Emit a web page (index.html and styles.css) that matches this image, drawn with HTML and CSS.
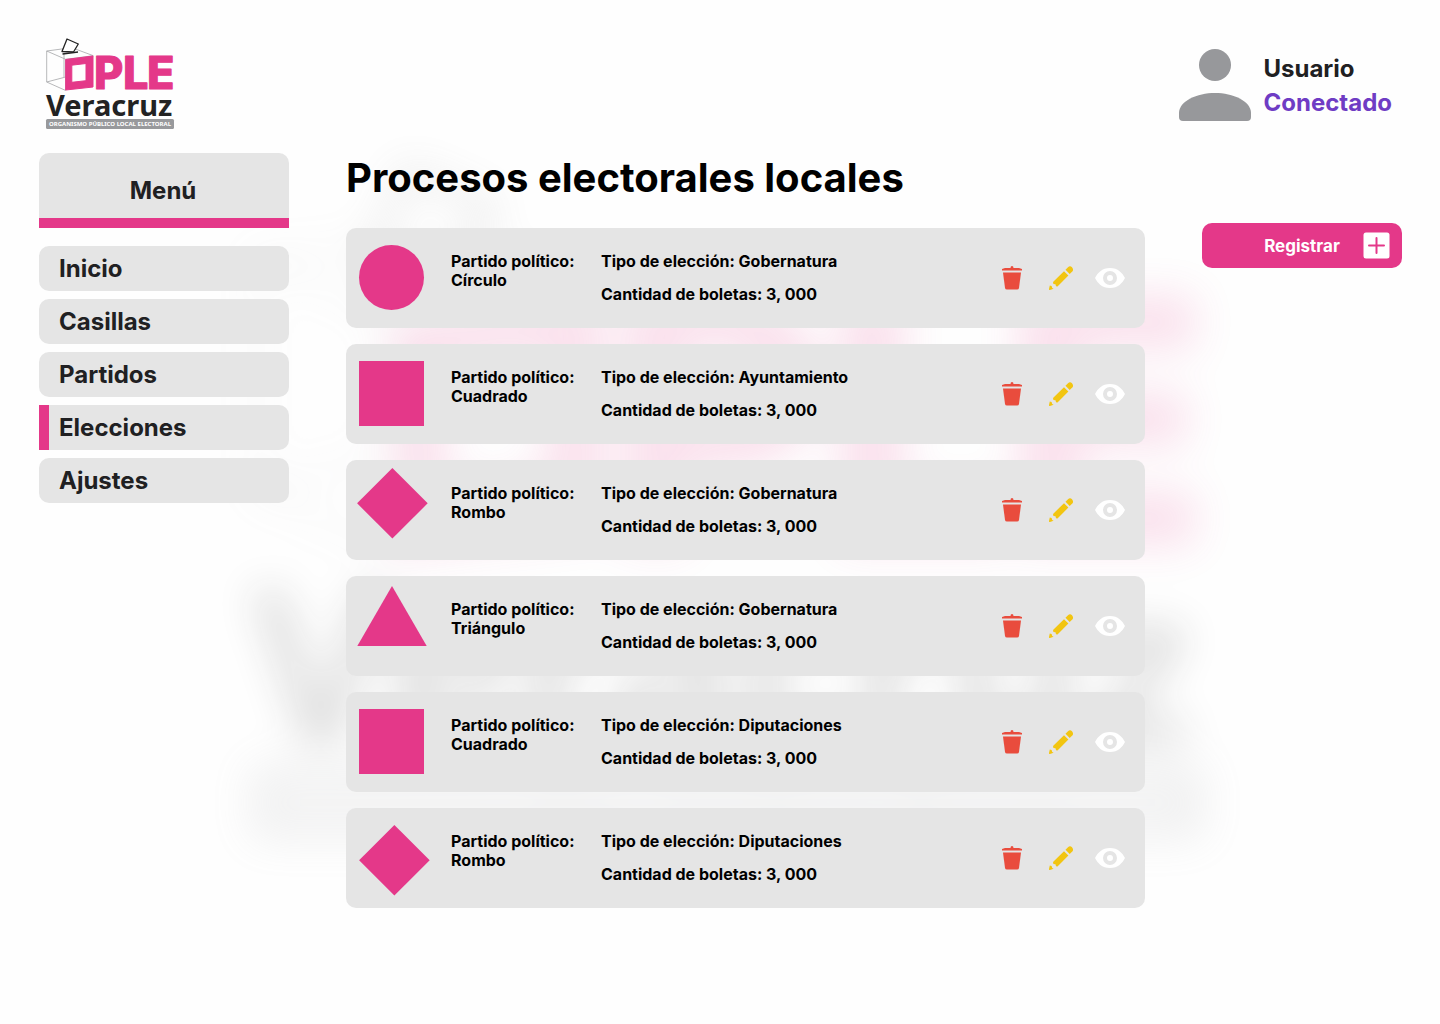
FILE: index.html
```html
<!DOCTYPE html>
<html lang="es">
<head>
<meta charset="utf-8">
<meta name="viewport" content="width=device-width, initial-scale=1">
<title>Procesos electorales locales</title>
<link rel="stylesheet" href="styles.css">
</head>
<body>
<svg class="sprite" width="0" height="0" aria-hidden="true">
  <defs>
    <g id="brand">
      <path d="M46.700 51v31L65.700 90.500V59.300zM46.700 51 64 48.700M74 48.500 93.300 55.700 65.700 59.300M64 53v24M46.700 82 65.700 77" fill="none" stroke="#a5a6a8" stroke-width=".8"/>
      <path d="M67 39 78.300 44 73.500 52 62 51.500z" fill="#fff" stroke="#232323" stroke-width="1.300" stroke-linejoin="round"/>
      <path d="M62.500 54 78 52" stroke="#232323" stroke-width="1.300" fill="none"/>
      <path fill-rule="evenodd" fill="#e43889" stroke="#e43889" stroke-linejoin="round" d="M65.700 59.500 93 56V87L65.700 90zM71.800 65.200V82.300L86 80.700V63.500z"/>
      <text class="brand-ple" x="94 123 147" y="89">PLE</text>
      <text class="brand-name" x="46" y="116">Veracruz</text>
      <rect x="46" y="119" width="128" height="10" rx="1.500" fill="#98999c"/>
      <text class="brand-tagline" x="110" y="126">ORGANISMO PÚBLICO LOCAL ELECTORAL</text>
    </g>
    <g id="trash" fill="#e94c3d">
      <path d="M0 4.500V3L3 2h5.500q0-2 1.500-2t1.500 2H17l3 1V4.500z"/>
      <path d="M1 6.500h18l-2 15.500q-.3 1.500-2 1.500H5q-1.700 0-2-1.500z"/>
    </g>
    <g id="pencil" fill="#f2c511">
      <path d="M16.500 3.800 19 1.300q2-2 4 0l.3.400q1.500 2 0 3.800L20.700 8z"/>
      <path d="M15 5.200 19.400 9.500 8.500 20.500 7 20.300 6.500 18.300 4.400 18 4 15.900z"/>
      <path d="M.800 19.500 2.600 20.100 3.200 22 4.600 22.700 1 24q-1.200.2-1-1z"/>
    </g>
    <path id="eye" fill="#fff" fill-rule="evenodd" d="M15 0C23 0 27.500 5 30 10 27.500 15 23 20 15 20S2.500 15 0 10C2.500 5 7 0 15 0zM15 3a7 7 0 1 0 0 14 7 7 0 0 0 0-14zM15 7a3 3 0 1 1 0 6 3 3 0 0 1 0-6z"/>
  </defs>
</svg>

<svg class="watermark" viewBox="39 37 140 96" aria-hidden="true"><use href="#brand"/></svg>

<header class="header">
  <svg class="logo" viewBox="39 37 140 96" role="img" aria-label="OPLE Veracruz"><use href="#brand"/></svg>
  <div class="user">
    <svg class="avatar" viewBox="0 0 72 72" aria-hidden="true"><circle cx="36" cy="16" r="16"/><path d="M0 64C0 52 18 44 36 44s36 8 36 20v4q0 4-4 4H4q-4 0-4-4z"/></svg>
    <div class="user-text">
      <div>Usuario</div>
      <div class="user-status">Conectado</div>
    </div>
  </div>
</header>

<div class="layout">
  <nav class="menu" aria-labelledby="menu-title">
    <h2 class="menu-title" id="menu-title">Menú</h2>
    <ul class="menu-list">
      <li><a class="menu-link" href="#inicio">Inicio</a></li>
      <li><a class="menu-link" href="#casillas">Casillas</a></li>
      <li><a class="menu-link" href="#partidos">Partidos</a></li>
      <li><a class="menu-link menu-link-active" href="#elecciones" aria-current="page">Elecciones</a></li>
      <li><a class="menu-link" href="#ajustes">Ajustes</a></li>
    </ul>
  </nav>

  <main>
    <h1 class="title">Procesos electorales locales</h1>
    <ul class="cards">
      <li class="card">
        <svg class="shape" viewBox="0 0 105 100" aria-hidden="true"><circle cx="45.500" cy="49.500" r="32.500"/></svg>
        <p class="party">Partido político:<br>Círculo</p>
        <div class="details"><p>Tipo de elección: Gobernatura</p><p>Cantidad de boletas: 3, 000</p></div>
        <div class="actions">
          <button class="action" type="button" aria-label="Eliminar"><svg width="20" height="24"><use href="#trash"/></svg></button>
          <button class="action" type="button" aria-label="Editar"><svg width="24" height="24"><use href="#pencil"/></svg></button>
          <button class="action" type="button" aria-label="Ver"><svg width="30" height="20"><use href="#eye"/></svg></button>
        </div>
      </li>
      <li class="card">
        <svg class="shape" viewBox="0 0 105 100" aria-hidden="true"><rect x="13" y="17" width="65" height="65"/></svg>
        <p class="party">Partido político:<br>Cuadrado</p>
        <div class="details"><p>Tipo de elección: Ayuntamiento</p><p>Cantidad de boletas: 3, 000</p></div>
        <div class="actions">
          <button class="action" type="button" aria-label="Eliminar"><svg width="20" height="24"><use href="#trash"/></svg></button>
          <button class="action" type="button" aria-label="Editar"><svg width="24" height="24"><use href="#pencil"/></svg></button>
          <button class="action" type="button" aria-label="Ver"><svg width="30" height="20"><use href="#eye"/></svg></button>
        </div>
      </li>
      <li class="card">
        <svg class="shape" viewBox="0 0 105 100" aria-hidden="true"><path d="M46.400 8 81.700 43.300 46.400 78.600 11.100 43.300z"/></svg>
        <p class="party">Partido político:<br>Rombo</p>
        <div class="details"><p>Tipo de elección: Gobernatura</p><p>Cantidad de boletas: 3, 000</p></div>
        <div class="actions">
          <button class="action" type="button" aria-label="Eliminar"><svg width="20" height="24"><use href="#trash"/></svg></button>
          <button class="action" type="button" aria-label="Editar"><svg width="24" height="24"><use href="#pencil"/></svg></button>
          <button class="action" type="button" aria-label="Ver"><svg width="30" height="20"><use href="#eye"/></svg></button>
        </div>
      </li>
      <li class="card">
        <svg class="shape" viewBox="0 0 105 100" aria-hidden="true"><path d="M46 10 80.700 70H11.300z"/></svg>
        <p class="party">Partido político:<br>Triángulo</p>
        <div class="details"><p>Tipo de elección: Gobernatura</p><p>Cantidad de boletas: 3, 000</p></div>
        <div class="actions">
          <button class="action" type="button" aria-label="Eliminar"><svg width="20" height="24"><use href="#trash"/></svg></button>
          <button class="action" type="button" aria-label="Editar"><svg width="24" height="24"><use href="#pencil"/></svg></button>
          <button class="action" type="button" aria-label="Ver"><svg width="30" height="20"><use href="#eye"/></svg></button>
        </div>
      </li>
      <li class="card">
        <svg class="shape" viewBox="0 0 105 100" aria-hidden="true"><rect x="13" y="17" width="65" height="65"/></svg>
        <p class="party">Partido político:<br>Cuadrado</p>
        <div class="details"><p>Tipo de elección: Diputaciones</p><p>Cantidad de boletas: 3, 000</p></div>
        <div class="actions">
          <button class="action" type="button" aria-label="Eliminar"><svg width="20" height="24"><use href="#trash"/></svg></button>
          <button class="action" type="button" aria-label="Editar"><svg width="24" height="24"><use href="#pencil"/></svg></button>
          <button class="action" type="button" aria-label="Ver"><svg width="30" height="20"><use href="#eye"/></svg></button>
        </div>
      </li>
      <li class="card">
        <svg class="shape" viewBox="0 0 105 100" aria-hidden="true"><path d="M48.400 17 83.700 52.300 48.400 87.600 13.100 52.300z"/></svg>
        <p class="party">Partido político:<br>Rombo</p>
        <div class="details"><p>Tipo de elección: Diputaciones</p><p>Cantidad de boletas: 3, 000</p></div>
        <div class="actions">
          <button class="action" type="button" aria-label="Eliminar"><svg width="20" height="24"><use href="#trash"/></svg></button>
          <button class="action" type="button" aria-label="Editar"><svg width="24" height="24"><use href="#pencil"/></svg></button>
          <button class="action" type="button" aria-label="Ver"><svg width="30" height="20"><use href="#eye"/></svg></button>
        </div>
      </li>
    </ul>
  </main>

  <aside class="side">
    <button class="register" type="button">
      <span class="register-label">Registrar</span>
      <svg class="register-icon" width="27" height="27" viewBox="0 0 27 27" aria-hidden="true"><rect x=".5" y=".5" width="26" height="26" rx="2.500" fill="#fff"/><path d="M13.500 6v15M6 13.500h15" stroke="#e43889" stroke-width="2" stroke-linecap="round"/></svg>
    </button>
  </aside>
</div>
</body>
</html>
```
FILE: styles.css
```css
* {
  box-sizing: border-box;
}

body {
  margin: 0;
  position: relative;
  min-height: 100vh;
  background: #fefefe;
  color: #000;
  font-family: Inter, "Liberation Sans", sans-serif;
  font-weight: 700;
}

h1,
h2,
p,
ul {
  margin: 0;
  padding: 0;
}

ul {
  list-style: none;
}

button {
  border: 0;
  padding: 0;
  background: none;
  font: inherit;
  cursor: pointer;
}

.sprite {
  position: absolute;
}

/* Oversized, blurred logo behind the page */
.watermark {
  position: absolute;
  z-index: -1;
  top: 155px;
  left: 0;
  right: 0;
  width: 1042px;
  margin: 0 auto;
  opacity: 0.14;
  filter: blur(20px);
}

.brand-ple {
  font: 800 45px Inter, sans-serif;
  fill: #e43889;
  stroke: #e43889;
  stroke-width: 1px;
  stroke-linejoin: round;
}

.brand-name {
  font: 700 29px "Noto Sans", sans-serif;
  fill: #232323;
}

.brand-tagline {
  font: 700 6px "Noto Sans", sans-serif;
  fill: #fff;
  text-anchor: middle;
}

.header {
  display: flex;
  align-items: center;
  justify-content: space-between;
  padding: 37px 48px 20px 39px;
}

.logo {
  width: 140px;
  height: 96px;
}

.user {
  display: flex;
  align-items: center;
  gap: 12px;
  color: #202022;
  font-size: 24px;
  line-height: 34px;
}

.user-text {
  padding-top: 2px;
}

.avatar {
  width: 72px;
  height: 72px;
  fill: #97989b;
}

.user-status {
  color: #6f3cc4;
}

.layout {
  display: grid;
  grid-template-columns: 250px 1fr 200px;
  column-gap: 57px;
  align-items: start;
  padding: 0 38px 40px 39px;
}

.menu {
  color: #202022;
  font-size: 24px;
}

.menu-title {
  padding: 23px 2px 12px 0;
  border-bottom: 10px solid #e43889;
  border-radius: 10px 10px 0 0;
  background: #e5e5e5;
  font-size: 24px;
  line-height: 30px;
  text-align: center;
}

.menu-list {
  display: grid;
  gap: 8px;
  margin-top: 18px;
}

.menu-link {
  display: block;
  padding: 0 20px;
  border-radius: 10px;
  background: #e5e5e5;
  color: inherit;
  line-height: 45px;
  text-decoration: none;
}

.menu-link-active {
  padding-left: 10px;
  border-left: 10px solid #e43889;
  border-radius: 0 10px 10px 0;
}

.title {
  margin-bottom: 25px;
  font-size: 40px;
  line-height: 50px;
}

.cards {
  display: grid;
  gap: 16px;
}

.card {
  display: grid;
  grid-template-columns: 105px 150px 1fr auto;
  min-height: 100px;
  padding-right: 20px;
  border-radius: 10px;
  background: #e5e5e5;
  font-size: 16px;
  line-height: 19px;
}

.shape {
  width: 105px;
  height: 100px;
  fill: #e43889;
}

.party {
  padding-top: 24px;
}

.details {
  display: flex;
  flex-direction: column;
  gap: 14px;
  padding-top: 24px;
}

.actions {
  display: flex;
  align-items: center;
  gap: 19px;
}

.action {
  display: flex;
  justify-content: center;
  width: 30px;
}

.side {
  padding-top: 70px;
}

.register {
  display: grid;
  grid-template-columns: 1fr auto 1fr;
  align-items: center;
  width: 100%;
  height: 45px;
  padding: 0 12px;
  border-radius: 10px;
  background: #e43889;
  color: #fff;
  font-size: 17px;
}

.register-label {
  grid-column: 2;
}

.register-icon {
  justify-self: end;
}
```
